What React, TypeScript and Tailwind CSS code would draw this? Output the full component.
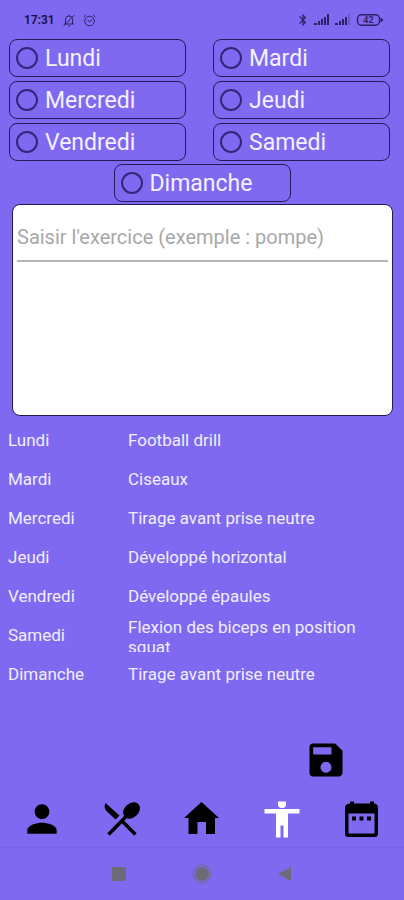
import React, { useState } from 'react';
import { MdBluetooth, MdPerson, MdSave } from 'react-icons/md';

const gridDays = ['Lundi', 'Mardi', 'Mercredi', 'Jeudi', 'Vendredi', 'Samedi'];

const program = [
  { day: 'Lundi', exercise: 'Football drill' },
  { day: 'Mardi', exercise: 'Ciseaux' },
  { day: 'Mercredi', exercise: 'Tirage avant prise neutre' },
  { day: 'Jeudi', exercise: 'Développé horizontal' },
  { day: 'Vendredi', exercise: 'Développé épaules' },
  { day: 'Samedi', exercise: 'Flexion des biceps en position squat' },
  { day: 'Dimanche', exercise: 'Tirage avant prise neutre' },
];

const CutleryIcon: React.FC = () => (
  <svg width="44" height="44" viewBox="0 0 44 44" fill="currentColor">
    <path d="M5.500 6L19.500 18.500L15.500 22.500L6 13.500Q3.500 10 5.500 6z" />
    <ellipse cx="31.500" cy="13.500" rx="9.500" ry="7" transform="rotate(-42 31.500 13.500)" />
    <path d="M28 17.500L8.500 37.500M22 24L35.500 37.500" fill="none" stroke="currentColor" strokeWidth="3.400" />
  </svg>
);

const HomeIcon: React.FC = () => (
  <svg width="44" height="44" viewBox="0 0 44 44" fill="currentColor">
    <path d="M21.500 5L39 21H35V37H26V25H17.500V37H8.500V21H4z" />
  </svg>
);

const BodyIcon: React.FC = () => (
  <svg width="44" height="44" viewBox="0 0 44 44" fill="currentColor">
    <path d="M18 4.500h8v3q0 3.500-4 3.500t-4-3.500zM4.500 12H39.500V16.500H28V40.500H23.500V28.500H20.500V40.500H16V16.500H4.500z" />
  </svg>
);

const CalendarIcon: React.FC = () => (
  <svg width="44" height="44" viewBox="0 0 44 44" fill="currentColor">
    <path
      fillRule="evenodd"
      d="M10 6.500V4.500h4v2H30V4.500h4v2Q38 7 38 10.500V36.500Q38 40 34.500 40H8.500Q5 40 5 36.500V10.500Q5 7 10 6.500zM8.500 16.500V36.500H34.500V16.500z"
    />
    <path d="M12 19.500h4v4h-4zM19.500 19.500h4v4h-4zM27 19.500h4v4h-4z" />
  </svg>
);

const ProfileIcon: React.FC = () => <MdPerson size={44} />;

const tabs = [
  { label: 'Profil', icon: ProfileIcon },
  { label: 'Repas', icon: CutleryIcon },
  { label: 'Accueil', icon: HomeIcon },
  { label: 'Exercices', icon: BodyIcon, active: true },
  { label: 'Calendrier', icon: CalendarIcon },
];

const Signal: React.FC<{ weak?: boolean }> = ({ weak }) => (
  <svg width="17" height="12" viewBox="0 0 17 12" fill="currentColor">
    <rect x="0" y="9" width="3" height="2" />
    <rect x="4" y="7" width="2" height="4" />
    <rect x="7" y="5" width="2" height="6" />
    <rect x="10" y="3" width="2" height="8" />
    <rect x="13" y="0" width="2" height="11" opacity={weak ? 0.25 : 1} />
  </svg>
);

const StatusBar: React.FC = () => (
  <header className="flex h-[38px] items-center justify-between pt-0.5 pr-5 pl-6 text-[#2c2263]">
    <div className="flex items-center gap-2">
      <span className="text-[12px] font-semibold text-[#17103f]">17:31</span>
      <svg width="12" height="13" viewBox="0 0 12 13" fill="none" stroke="currentColor">
        <path d="M1 10h10M2.500 10V5.500a3.500 3.500 0 0 1 7 0V10M5 12h2M6 2V.5M.5 12L11.500 1" />
      </svg>
      <svg width="13" height="13" viewBox="0 0 13 13" fill="none" stroke="currentColor">
        <circle cx="6.500" cy="7" r="4.800" />
        <path d="M.7 3L3 .8M12.300 3L10 .8M4.500 6l2 1.500L9 6" />
      </svg>
    </div>
    <div className="flex items-center gap-1">
      <MdBluetooth size={14} />
      <Signal />
      <Signal weak />
      <svg width="28" height="12" viewBox="0 0 28 12">
        <rect x="1.500" y=".7" width="22" height="10.600" rx="4" fill="none" stroke="currentColor" strokeWidth="1.400" />
        <path d="M25 4l2 2-2 2z" fill="currentColor" stroke="currentColor" />
        <text x="12.500" y="9" textAnchor="middle" fontSize="9" fontWeight="600" fill="currentColor">
          42
        </text>
      </svg>
    </div>
  </header>
);

interface DayOptionProps {
  name: string;
  checked: boolean;
  onSelect: (name: string) => void;
}

const DayOption: React.FC<DayOptionProps> = ({ name, checked, onSelect }) => (
  <label className="flex h-[38px] min-w-[177px] items-center gap-[7px] rounded-lg border border-[#251b58] px-1.5 text-[23px] leading-7 text-[#f4f1ff]">
    <input
      type="radio"
      name="day"
      value={name}
      checked={checked}
      onChange={() => onSelect(name)}
      className="size-[22px] shrink-0 appearance-none rounded-full border-2 border-[#33277a] checked:bg-[#33277a]"
    />
    <span className="pt-0.5">{name}</span>
  </label>
);

const App: React.FC = () => {
  const [day, setDay] = useState('');
  const [exercise, setExercise] = useState('');

  return (
    <div className="flex min-h-screen flex-col bg-[#7e69f0] font-[Roboto,sans-serif]">
      <StatusBar />

      <main className="flex grow flex-col">
        <fieldset>
          <div className="grid grid-cols-2 gap-x-[27px] gap-y-1 pt-px pr-3.5 pl-[9px]">
            {gridDays.map((name) => (
              <DayOption key={name} name={name} checked={day === name} onSelect={setDay} />
            ))}
          </div>
          <div className="flex justify-center pt-[3px]">
            <DayOption name="Dimanche" checked={day === 'Dimanche'} onSelect={setDay} />
          </div>
        </fieldset>

        <section className="mt-0.5 mr-[11px] ml-3 h-[212px] rounded-lg border border-[#251b58] bg-white px-1 pt-2">
          <input
            type="text"
            aria-label="Exercice"
            placeholder="Saisir l'exercice (exemple : pompe)"
            value={exercise}
            onChange={(e) => setExercise(e.target.value)}
            className="h-[49px] w-full border-b-2 border-[#b5b5b5] text-[20px] text-gray-800 outline-none placeholder:text-[#a8a8a8]"
          />
        </section>

        <table className="mt-1 w-full table-fixed text-left text-[17px] leading-5 text-[#f1eeff]">
          <tbody>
            {program.map((item) => (
              <tr key={item.day} className="h-[39px]">
                <th scope="row" className="w-32 p-0 pl-2 font-normal">
                  {item.day}
                </th>
                <td className="p-0 pr-4">
                  <div className="max-h-[35px] overflow-hidden">{item.exercise}</div>
                </td>
              </tr>
            ))}
          </tbody>
        </table>

        <div className="mt-auto flex justify-end pr-14">
          <button type="button" aria-label="Enregistrer" className="text-black">
            <MdSave size={44} />
          </button>
        </div>
      </main>

      <nav className="mt-[15px] grid grid-cols-5 px-0.5 pb-1.5">
        {tabs.map(({ label, icon: Icon, active }) => (
          <a
            key={label}
            href="#"
            aria-label={label}
            className={`flex justify-center ${active ? 'text-white' : 'text-black'}`}
          >
            <Icon />
          </a>
        ))}
      </nav>

      <footer className="flex h-[53px] items-center justify-center gap-[63px] border-t border-[#7963e8] text-[#6c6b78]">
        <button type="button" aria-label="Applications récentes">
          <svg width="20" height="20" viewBox="0 0 20 20" fill="currentColor">
            <rect x="3" y="3" width="14" height="14" />
          </svg>
        </button>
        <button type="button" aria-label="Écran d'accueil">
          <svg width="20" height="20" viewBox="0 0 20 20" fill="currentColor">
            <circle cx="10" cy="10" r="9" fill="none" stroke="currentColor" />
            <circle cx="10" cy="10" r="7" />
          </svg>
        </button>
        <button type="button" aria-label="Retour">
          <svg width="20" height="20" viewBox="0 0 20 20" fill="currentColor">
            <path d="M3 10L16 3v14z" />
          </svg>
        </button>
      </footer>
    </div>
  );
};

export default App;
